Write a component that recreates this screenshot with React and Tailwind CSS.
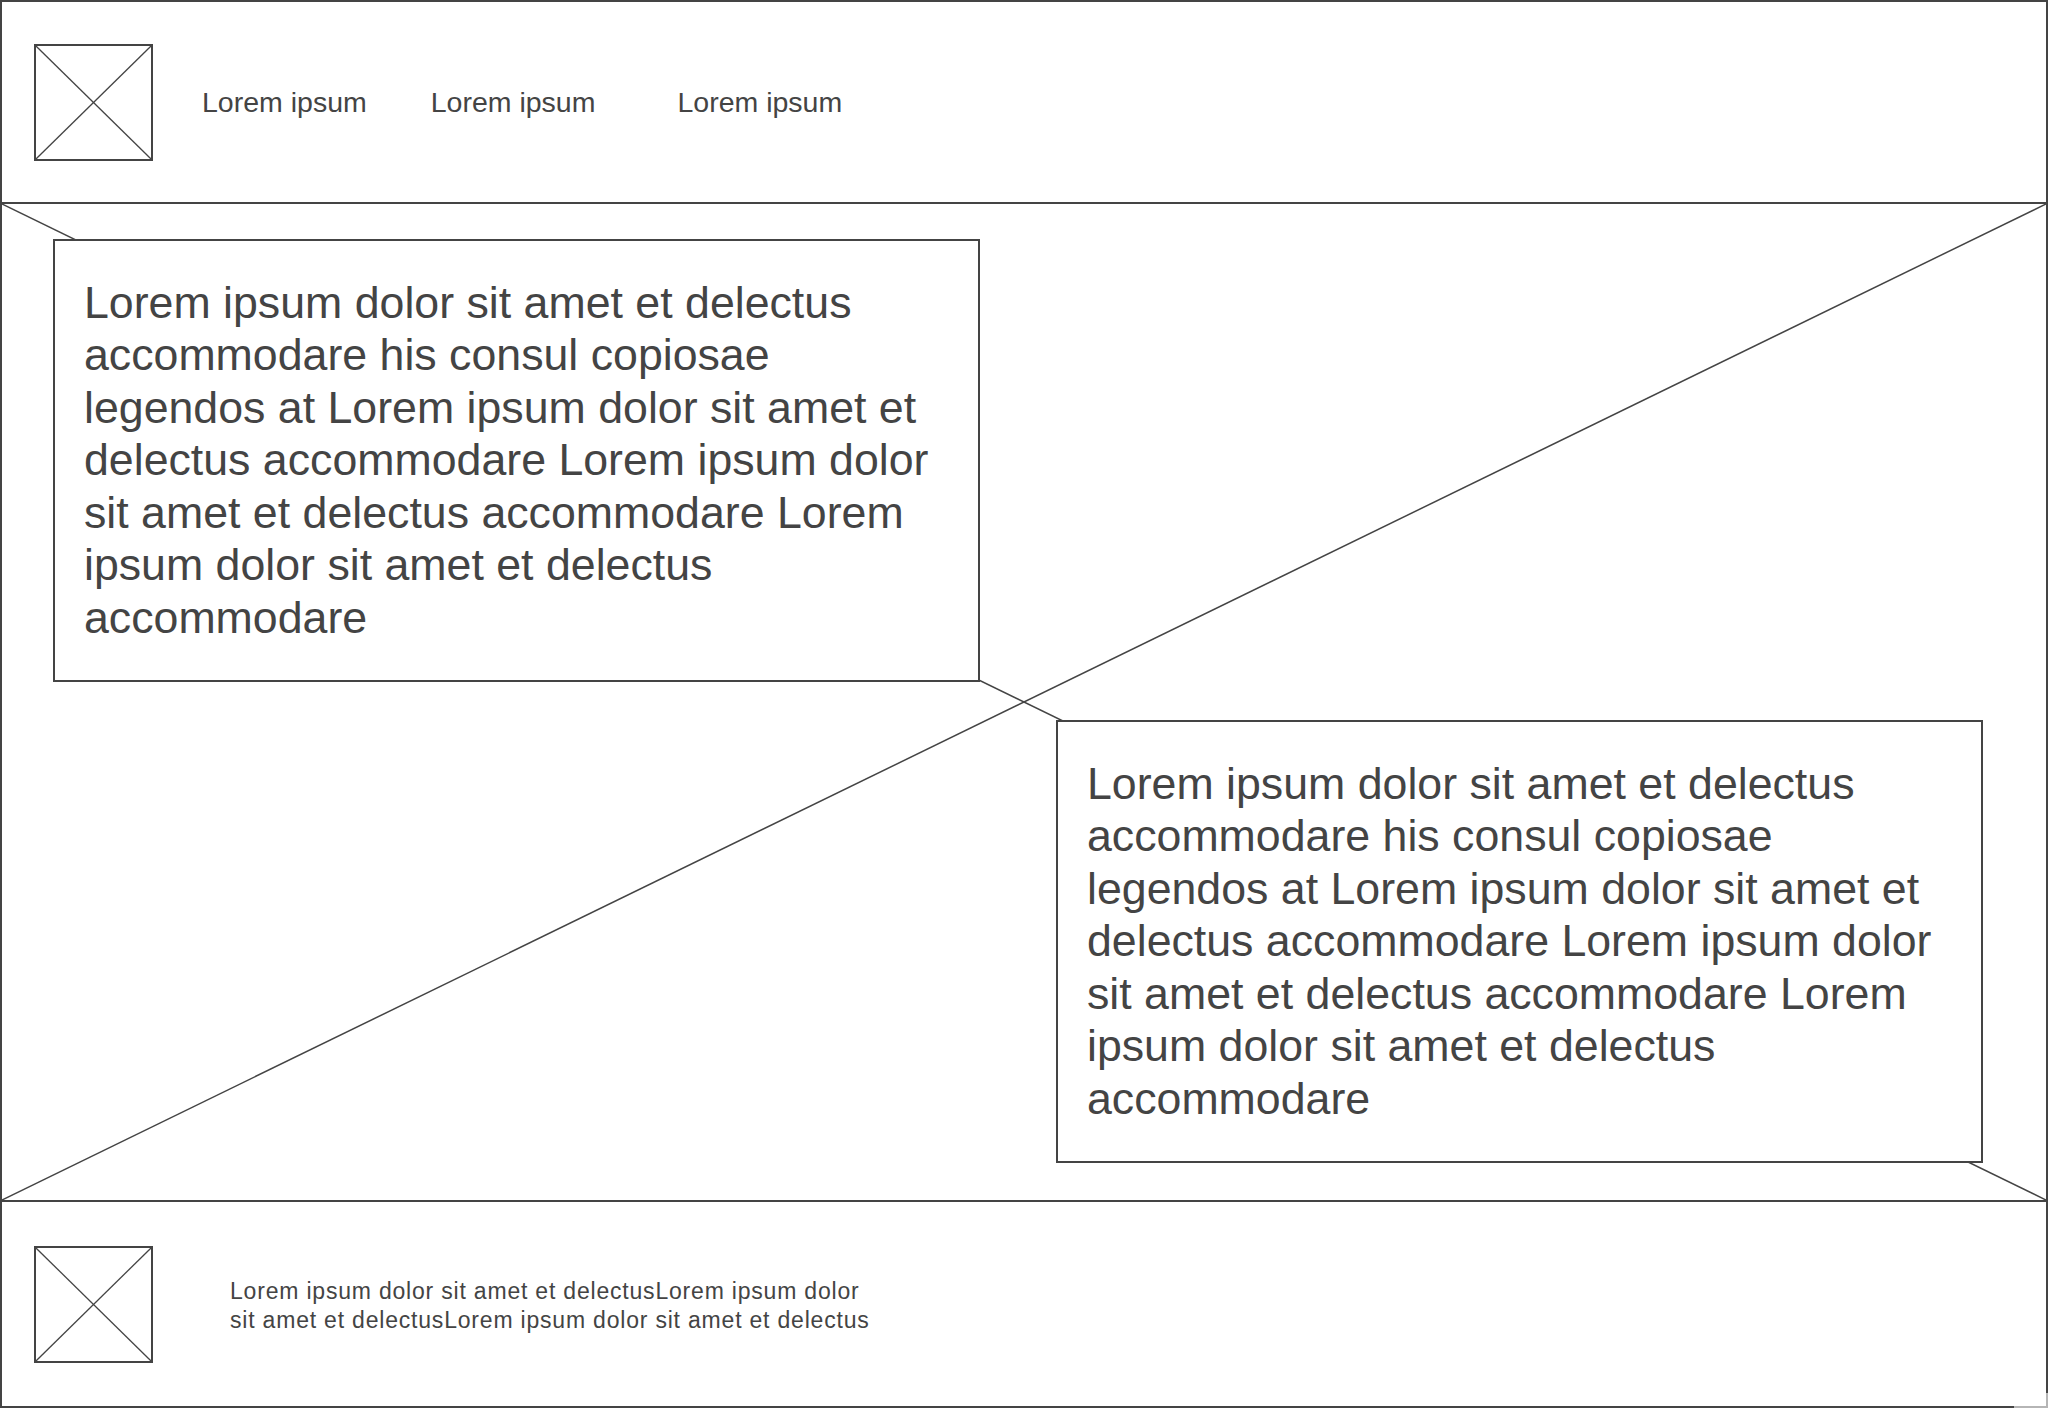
import React from "react";

const FONT = { fontFamily: '"Liberation Sans", Arial, Helvetica, sans-serif' };

function Placeholder() {
  return (
    <div className="relative w-[119px] h-[117px] shrink-0 border-2 border-[#444] bg-white">
      <svg className="absolute inset-0 w-full h-full" xmlns="http://www.w3.org/2000/svg">
        <line x1="0" y1="0" x2="100%" y2="100%" stroke="#444" strokeWidth="1.3" />
        <line x1="0" y1="100%" x2="100%" y2="0" stroke="#444" strokeWidth="1.3" />
      </svg>
    </div>
  );
}

const BODY =
  "Lorem ipsum dolor sit amet et delectus accommodare his consul copiosae legendos at Lorem ipsum dolor sit amet et delectus accommodare Lorem ipsum dolor sit amet et delectus accommodare Lorem ipsum dolor sit amet et delectus accommodare";

function TextBox({ className }) {
  return (
    <div
      className={
        "relative w-[927px] h-[443px] shrink-0 border-2 border-[#444] bg-white flex items-center pl-[29px] pr-[30px] " +
        className
      }
    >
      <p className="text-[44.7px] leading-[52.5px] text-[#444]">{BODY}</p>
    </div>
  );
}

export default function App() {
  return (
    <div
      className="relative w-[2048px] h-[1408px] border-2 border-[#444] bg-white flex flex-col text-[#444]"
      style={FONT}
    >
      <header className="h-[202px] shrink-0 border-b-2 border-[#444] flex items-center pl-[32px]">
        <Placeholder />
        <span className="ml-[49px] text-[28.5px]">Lorem ipsum</span>
        <span className="ml-[64px] text-[28.5px]">Lorem ipsum</span>
        <span className="ml-[82px] text-[28.5px]">Lorem ipsum</span>
      </header>

      <section className="relative h-[998px] shrink-0 border-b-2 border-[#444] flex flex-col pt-[35px] pl-[51px] pr-[63px]">
        <svg className="absolute inset-0 w-full h-full" xmlns="http://www.w3.org/2000/svg">
          <line x1="0" y1="0" x2="100%" y2="100%" stroke="#444" strokeWidth="1.5" />
          <line x1="0" y1="100%" x2="100%" y2="0" stroke="#444" strokeWidth="1.5" />
        </svg>
        <TextBox className="self-start" />
        <TextBox className="self-end mt-[38px]" />
      </section>

      <footer className="flex-1 flex items-center pl-[32px]">
        <Placeholder />
        <p className="ml-[77px] mt-[3px] w-[648px] text-[23px] tracking-[0.8px] leading-[28.5px]">
          Lorem ipsum dolor sit amet et delectusLorem ipsum dolor sit amet et delectusLorem ipsum dolor sit amet et delectus
        </p>
      </footer>

      <div className="absolute right-[-2px] bottom-[-2px] w-[34px] h-[15px] border-r-2 border-b-2 border-[#b5b5b5]" />
    </div>
  );
}
